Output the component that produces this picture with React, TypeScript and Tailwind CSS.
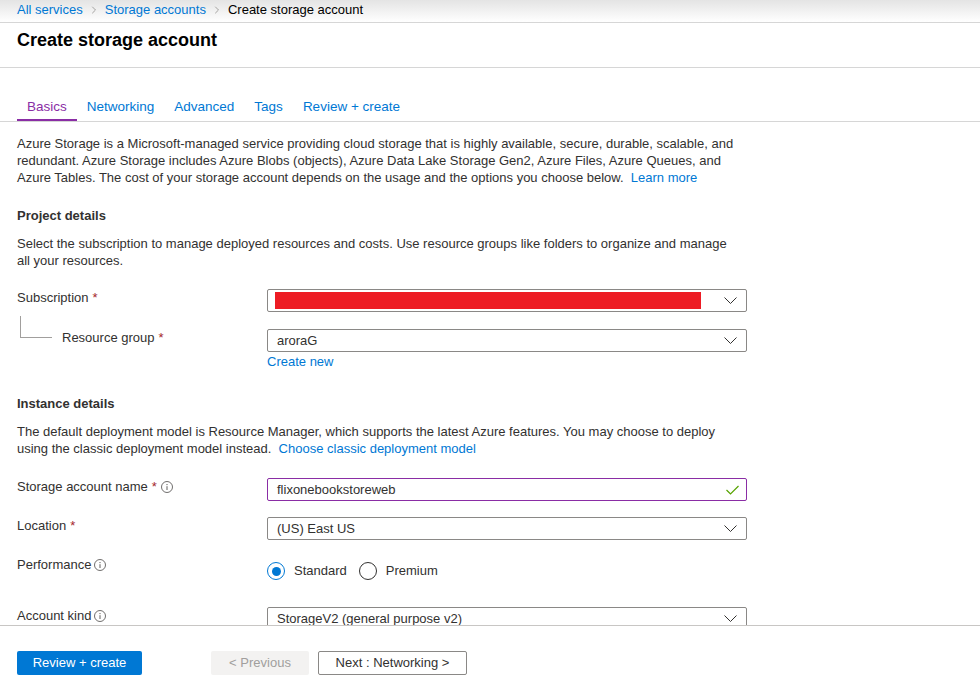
import { ChevronRight } from "lucide-react";

const font = { fontFamily: '"Liberation Sans", Arial, sans-serif' };

const Chevron = () => (
  <svg width="13" height="7" viewBox="0 0 13 7" className="shrink-0">
    <polyline points="0.5,0.5 6.5,6.5 12.5,0.5" fill="none" stroke="#323130" strokeWidth="1" />
  </svg>
);

const Info = () => (
  <svg width="12" height="12" viewBox="0 0 12 12" className="inline-block shrink-0">
    <circle cx="6" cy="6" r="5.5" fill="none" stroke="#605e5c" strokeWidth="0.9" />
    <circle cx="6" cy="3.6" r="0.7" fill="#605e5c" />
    <line x1="6" y1="5.2" x2="6" y2="9" stroke="#605e5c" strokeWidth="1" />
  </svg>
);

const Req = () => <span className="text-[#a4262c] ml-[4px]">*</span>;

function Select({ children }: { children?: React.ReactNode }) {
  return (
    <div className="w-[480px] h-[23px] border border-[#8a8886] rounded-[2px] flex items-center justify-between pl-[9px] pr-[9px] text-[13px] text-[#323130]">
      <div className="flex items-center">{children}</div>
      <Chevron />
    </div>
  );
}

function Row({ label, children, className }: { label: React.ReactNode; children: React.ReactNode; className?: string }) {
  return (
    <div className={"flex items-start " + (className ?? "")}>
      <div className="w-[250px] leading-[17px] flex items-center">{label}</div>
      {children}
    </div>
  );
}

const tabs = ["Basics", "Networking", "Advanced", "Tags", "Review + create"];

export default function App() {
  return (
    <div className="w-[980px] h-[693px] bg-white flex flex-col overflow-hidden text-[13px] text-[#323130]" style={font}>
      {/* breadcrumb */}
      <div className="h-[23px] shrink-0 bg-gradient-to-b from-[#e4e4e4] to-white border-b border-[#d6d6d6] flex items-center pl-[17px] pb-[3px] gap-[5px]">
        <span className="text-[#0078d4]">All services</span>
        <ChevronRight size={12} strokeWidth={1.5} color="#8a8886" />
        <span className="text-[#0078d4]">Storage accounts</span>
        <ChevronRight size={12} strokeWidth={1.5} color="#8a8886" />
        <span className="text-black">Create storage account</span>
      </div>

      {/* title */}
      <div className="h-[45px] shrink-0 border-b border-[#d6d6d6] pl-[17px] pt-[6px]">
        <h1 className="text-[18px] font-bold text-black leading-[22px]">Create storage account</h1>
      </div>

      {/* tabs */}
      <div className="shrink-0 pt-[30px] pl-[17px] border-b border-[#d6d6d6] flex text-[13.5px]">
        {tabs.map((t, i) => (
          <div
            key={t}
            className={
              "px-[10px] leading-[18px] pb-[3px] border-b-2 " +
              (i === 0 ? "border-[#8a2da5] text-[#8a2da5]" : "border-transparent text-[#0078d4]")
            }
          >
            {t}
          </div>
        ))}
      </div>

      {/* body */}
      <div className="flex-1 overflow-hidden pl-[17px]">
        <p className="mt-[13px] w-[720px] leading-[17px]">
          Azure Storage is a Microsoft-managed service providing cloud storage that is highly available, secure, durable, scalable, and redundant. Azure Storage includes Azure Blobs (objects), Azure Data Lake Storage Gen2, Azure Files, Azure Queues, and Azure Tables. The cost of your storage account depends on the usage and the options you choose below.{"\u00a0 "}
          <span className="text-[#0078d4]">Learn more</span>
        </p>

        <h2 className="mt-[21px] font-bold leading-[17px]">Project details</h2>
        <p className="mt-[11px] w-[720px] leading-[17px]">
          Select the subscription to manage deployed resources and costs. Use resource groups like folders to organize and manage all your resources.
        </p>

        <Row className="mt-[20px]" label={<>Subscription<Req /></>}>
          <Select>
            <div className="w-[426px] h-[17px] bg-[#ed1c24] -ml-[2px]" />
          </Select>
        </Row>

        <Row
          className="mt-[17px]"
          label={
            <>
              <div className="w-[32px] h-[22px] -mt-[22px] ml-[3px] border-l border-b border-[#a19f9d] shrink-0" />
              <span className="ml-[10px]">Resource group</span>
              <Req />
            </>
          }
        >
          <div>
            <Select>aroraG</Select>
            <div className="text-[#0078d4] leading-[17px] mt-[1px]">Create new</div>
          </div>
        </Row>

        <h2 className="mt-[25px] font-bold leading-[17px]">Instance details</h2>
        <p className="mt-[11px] w-[720px] leading-[17px]">
          The default deployment model is Resource Manager, which supports the latest Azure features. You may choose to deploy using the classic deployment model instead.{"\u00a0 "}
          <span className="text-[#0078d4]">Choose classic deployment model</span>
        </p>

        <Row className="mt-[21px]" label={<>Storage account name<Req /><span className="ml-[4px] flex"><Info /></span></>}>
          <div className="w-[480px] h-[23px] border border-[#8a2da5] rounded-[2px] flex items-center justify-between pl-[9px] pr-[7px]">
            <span>flixonebookstoreweb</span>
            <svg width="13" height="10" viewBox="0 0 13 10">
              <polyline points="0.5,5 4.5,9 12.5,1" fill="none" stroke="#57a300" strokeWidth="1.2" />
            </svg>
          </div>
        </Row>

        <Row className="mt-[16px]" label={<>Location<Req /></>}>
          <Select>(US) East US</Select>
        </Row>

        <Row className="mt-[16px]" label={<>Performance<span className="ml-[3px] flex"><Info /></span></>}>
          <div className="mt-[6px] flex items-center h-[18px]">
            <span className="w-[18px] h-[18px] rounded-full border border-[#0078d4] flex items-center justify-center">
              <span className="w-[9px] h-[9px] rounded-full bg-[#0078d4]" />
            </span>
            <span className="ml-[9px]">Standard</span>
            <span className="ml-[12px] w-[18px] h-[18px] rounded-full border border-[#323130]" />
            <span className="ml-[9px]">Premium</span>
          </div>
        </Row>

        <Row className="mt-[27px]" label={<>Account kind<span className="ml-[3px] flex"><Info /></span></>}>
          <Select>StorageV2 (general purpose v2)</Select>
        </Row>
      </div>

      {/* footer */}
      <div className="h-[68px] shrink-0 border-t border-[#c8c6c4] pl-[17px] pt-[25px] flex items-start">
        <button className="w-[125px] h-[24px] bg-[#0078d4] text-white rounded-[2px]">Review + create</button>
        <button className="ml-[69px] w-[98px] h-[24px] bg-[#f3f2f1] text-[#a19f9d] rounded-[2px]">&lt; Previous</button>
        <button className="ml-[9px] w-[149px] h-[24px] border border-[#8a8886] text-[#323130] rounded-[2px]">Next : Networking &gt;</button>
      </div>
    </div>
  );
}
